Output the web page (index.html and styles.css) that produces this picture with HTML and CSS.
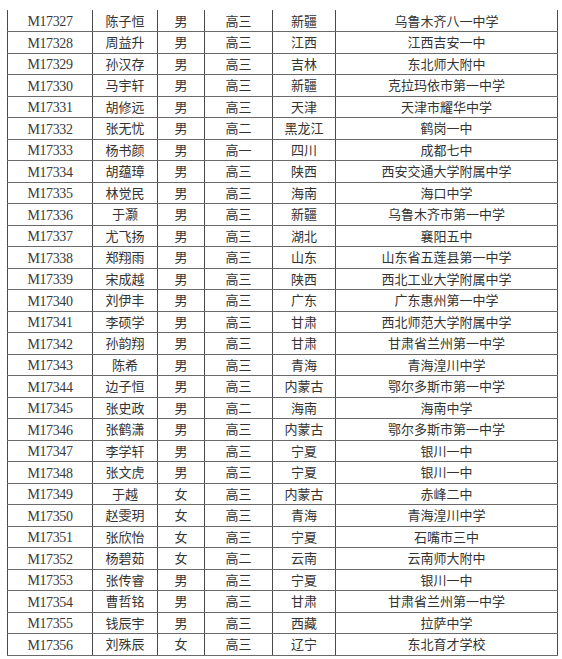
FILE: index.html
```html
<!DOCTYPE html>
<html lang="zh">
<head>
<meta charset="utf-8">
<link rel="stylesheet" href="styles.css">
</head>
<body>
<table class="roster">
<colgroup>
<col class="c-id"><col class="c-name"><col class="c-sex"><col class="c-grade"><col class="c-prov"><col class="c-school">
</colgroup>
<tbody>
<tr><td class="id">M17327</td><td>陈子恒</td><td>男</td><td>高三</td><td>新疆</td><td>乌鲁木齐八一中学</td></tr>
<tr><td class="id">M17328</td><td>周益升</td><td>男</td><td>高三</td><td>江西</td><td>江西吉安一中</td></tr>
<tr><td class="id">M17329</td><td>孙汉存</td><td>男</td><td>高三</td><td>吉林</td><td>东北师大附中</td></tr>
<tr><td class="id">M17330</td><td>马宇轩</td><td>男</td><td>高三</td><td>新疆</td><td>克拉玛依市第一中学</td></tr>
<tr><td class="id">M17331</td><td>胡修远</td><td>男</td><td>高三</td><td>天津</td><td>天津市耀华中学</td></tr>
<tr><td class="id">M17332</td><td>张无忧</td><td>男</td><td>高二</td><td>黑龙江</td><td>鹤岗一中</td></tr>
<tr><td class="id">M17333</td><td>杨书颜</td><td>男</td><td>高一</td><td>四川</td><td>成都七中</td></tr>
<tr><td class="id">M17334</td><td>胡蕴璋</td><td>男</td><td>高三</td><td>陕西</td><td>西安交通大学附属中学</td></tr>
<tr><td class="id">M17335</td><td>林觉民</td><td>男</td><td>高三</td><td>海南</td><td>海口中学</td></tr>
<tr><td class="id">M17336</td><td>于灏</td><td>男</td><td>高三</td><td>新疆</td><td>乌鲁木齐市第一中学</td></tr>
<tr><td class="id">M17337</td><td>尤飞扬</td><td>男</td><td>高三</td><td>湖北</td><td>襄阳五中</td></tr>
<tr><td class="id">M17338</td><td>郑翔雨</td><td>男</td><td>高三</td><td>山东</td><td>山东省五莲县第一中学</td></tr>
<tr><td class="id">M17339</td><td>宋成越</td><td>男</td><td>高三</td><td>陕西</td><td>西北工业大学附属中学</td></tr>
<tr><td class="id">M17340</td><td>刘伊丰</td><td>男</td><td>高三</td><td>广东</td><td>广东惠州第一中学</td></tr>
<tr><td class="id">M17341</td><td>李硕学</td><td>男</td><td>高三</td><td>甘肃</td><td>西北师范大学附属中学</td></tr>
<tr><td class="id">M17342</td><td>孙韵翔</td><td>男</td><td>高三</td><td>甘肃</td><td>甘肃省兰州第一中学</td></tr>
<tr><td class="id">M17343</td><td>陈希</td><td>男</td><td>高三</td><td>青海</td><td>青海湟川中学</td></tr>
<tr><td class="id">M17344</td><td>边子恒</td><td>男</td><td>高三</td><td>内蒙古</td><td>鄂尔多斯市第一中学</td></tr>
<tr><td class="id">M17345</td><td>张史政</td><td>男</td><td>高二</td><td>海南</td><td>海南中学</td></tr>
<tr><td class="id">M17346</td><td>张鹤潇</td><td>男</td><td>高三</td><td>内蒙古</td><td>鄂尔多斯市第一中学</td></tr>
<tr><td class="id">M17347</td><td>李学轩</td><td>男</td><td>高三</td><td>宁夏</td><td>银川一中</td></tr>
<tr><td class="id">M17348</td><td>张文虎</td><td>男</td><td>高三</td><td>宁夏</td><td>银川一中</td></tr>
<tr><td class="id">M17349</td><td>于越</td><td>女</td><td>高三</td><td>内蒙古</td><td>赤峰二中</td></tr>
<tr><td class="id">M17350</td><td>赵雯玥</td><td>女</td><td>高三</td><td>青海</td><td>青海湟川中学</td></tr>
<tr><td class="id">M17351</td><td>张欣怡</td><td>女</td><td>高三</td><td>宁夏</td><td>石嘴市三中</td></tr>
<tr><td class="id">M17352</td><td>杨碧茹</td><td>女</td><td>高二</td><td>云南</td><td>云南师大附中</td></tr>
<tr><td class="id">M17353</td><td>张传睿</td><td>男</td><td>高三</td><td>宁夏</td><td>银川一中</td></tr>
<tr><td class="id">M17354</td><td>曹哲铭</td><td>男</td><td>高三</td><td>甘肃</td><td>甘肃省兰州第一中学</td></tr>
<tr><td class="id">M17355</td><td>钱辰宇</td><td>男</td><td>高三</td><td>西藏</td><td>拉萨中学</td></tr>
<tr><td class="id">M17356</td><td>刘殊辰</td><td>女</td><td>高三</td><td>辽宁</td><td>东北育才学校</td></tr>
</tbody>
</table>
</body>
</html>
```

FILE: styles.css
```css
html, body {
  background: #ffffff;
}
body {
  margin: 10px 0 0 7px;
  font-family: "Noto Sans CJK SC", sans-serif;
  color: #333333;
}
.roster {
  border-collapse: collapse;
  table-layout: fixed;
  width: 550px;
  font-size: 13px;
}
.c-id { width: 85px; }
.c-name { width: 65px; }
.c-sex { width: 47px; }
.c-grade { width: 68px; }
.c-prov { width: 63px; }
.c-school { width: 222px; }
.roster tr {
  height: 21.5px;
}
.roster td {
  padding: 0;
  text-align: center;
  vertical-align: middle;
  line-height: 14px;
  border-left: 1px solid #4a4a4a;
  border-right: 1px solid #4a4a4a;
  border-bottom: 1px solid #6a6a6a;
  white-space: nowrap;
  overflow: hidden;
}
.roster td.id {
  font-family: "Liberation Serif", serif;
  font-size: 14px;
  letter-spacing: -0.4px;
  color: #3a3a3a;
  padding-top: 3px;
}
```
